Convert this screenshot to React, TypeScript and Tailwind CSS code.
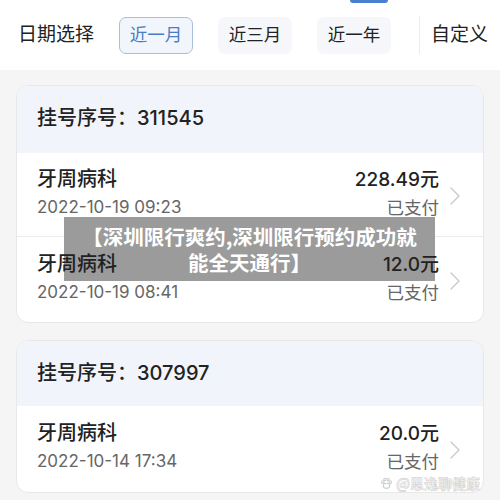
import React from "react";

const font = { fontFamily: 'Inter, "Noto Sans CJK SC", "Noto Sans", sans-serif' };

function Chevron() {
  return (
    <svg width="12" height="20" viewBox="0 0 12 20" className="shrink-0">
      <path d="M2 2 L10 10 L2 18" fill="none" stroke="#c8c8c8" strokeWidth="1.3" strokeLinecap="round" strokeLinejoin="round" />
    </svg>
  );
}

function Row({ date, price, h, border }: { date: string; price: string; h: string; border?: boolean }) {
  return (
    <div className={`flex items-center pl-5 pr-[22px] ${h} ${border ? "border-b border-[#ececec]" : ""}`}>
      <div className="relative z-[2] flex-1 flex flex-col gap-[3px] -mt-[3px]">
        <div className="text-[20px] leading-[25px] font-medium text-[#222]">牙周病科</div>
        <div className="text-[17px] leading-[25px] text-[#666]">{date}</div>
      </div>
      <div className="relative z-[2] flex flex-col items-end gap-[3px] -mt-[3px]">
        <div className="text-[19px] leading-[25px] font-medium text-[#222]">{price}</div>
        <div className="text-[17.5px] leading-[25px] text-[#666]">已支付</div>
      </div>
      <div className="ml-[10px] mt-[2px]">
        <Chevron />
      </div>
    </div>
  );
}

export default function App() {
  return (
    <div className="relative w-[500px] h-[500px] overflow-hidden bg-[#f5f5f5]" style={font}>
      <div className="absolute left-[350px] top-0 w-[38px] h-[3px] bg-[#4a7fd0] rounded-b" />
      <div className="h-[70px] bg-white flex items-center pl-[18px]">
        <div className="text-[19px] text-[#222] w-[101px]">日期选择</div>
        <div className="flex gap-[25px]">
          <div className="w-[74px] h-[37px] rounded-[7px] border border-[#a9c0dc] bg-[#f1f6fc] text-[#4a7cbf] text-[17.5px] flex items-center justify-center">近一月</div>
          <div className="w-[74px] h-[37px] rounded-[7px] bg-[#f5f7fa] text-[#222] text-[17.5px] flex items-center justify-center">近三月</div>
          <div className="w-[74px] h-[37px] rounded-[7px] bg-[#f5f7fa] text-[#222] text-[17.5px] flex items-center justify-center">近一年</div>
        </div>
        <div className="w-px h-[38px] bg-[#ececec] ml-[28px]" />
        <div className="ml-[11px] text-[19px] text-[#222]">自定义</div>
      </div>

      <div className="pt-[15px] px-4 flex flex-col gap-[17px]">
        <div className="rounded-[12px] bg-white border border-[#e8e8e8] overflow-hidden">
          <div className="h-[67px] bg-[#f1f5fb] flex items-center pl-5 pb-[4px] text-[20px] font-medium text-[#222]">挂号序号：311545</div>
          <Row date="2022-10-19 09:23" price="228.49元" h="h-[84px]" border />
          <Row date="2022-10-19 08:41" price="12.0元" h="h-[85px]" />
        </div>
        <div className="rounded-[12px] bg-white border border-[#e8e8e8] overflow-hidden">
          <div className="h-[65px] bg-[#f1f5fb] flex items-center pl-5 pb-[2px] text-[20px] font-medium text-[#222]">挂号序号：307997</div>
          <Row date="2022-10-14 17:34" price="20.0元" h="h-[86px]" />
        </div>
      </div>

      <div className="absolute z-[1] left-[64px] top-[217px] w-[371px] h-[64px] bg-[#9b9b9b] flex flex-col items-center justify-center text-white font-bold text-[20.5px] leading-[26px]" style={{ fontFamily: '"Noto Sans CJK SC", sans-serif' }}>
        <div>【深圳限行爽约,深圳限行预约成功就</div>
        <div>能全天通行】</div>
      </div>

      <div className="absolute left-[380px] top-[473px] flex items-center gap-[3px] text-[14px]" style={{ fontFamily: '"Noto Sans CJK SC", sans-serif' }}>
        <svg width="13" height="13" viewBox="0 0 14 14">
          <g fill="none" stroke="#cfcfcf" strokeWidth="1.2">
            <ellipse cx="7" cy="9.5" rx="3.5" ry="2.8" />
            <circle cx="3" cy="5.5" r="1.4" />
            <circle cx="11" cy="5.5" r="1.4" />
            <circle cx="5.3" cy="2.6" r="1.3" />
            <circle cx="8.7" cy="2.6" r="1.3" />
          </g>
        </svg>
        <span className="font-bold" style={{ WebkitTextStroke: "0.4px #c8c8c8", color: "#f4f4f4" }}>@思逸聊健康</span>
      </div>
    </div>
  );
}
